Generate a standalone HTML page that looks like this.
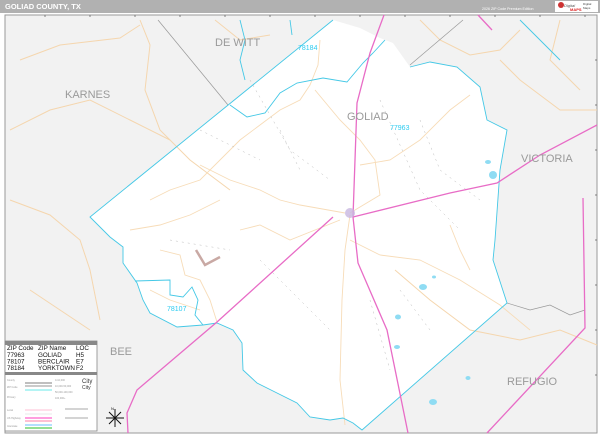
<!DOCTYPE html>
<html><head><meta charset="utf-8"><style>
html,body{margin:0;padding:0;width:600px;height:436px;overflow:hidden;background:#fff;font-family:"Liberation Sans",sans-serif}
</style></head><body>
<svg width="600" height="436" viewBox="0 0 600 436" xmlns="http://www.w3.org/2000/svg" font-family="Liberation Sans, sans-serif">
<rect width="600" height="436" fill="#fff"/>
<rect x="0" y="0" width="600" height="13" fill="#b1b1b1"/>
<text x="5" y="9" font-size="7.5" font-weight="bold" fill="#fff">GOLIAD COUNTY, TX</text>
<text x="482" y="10" font-size="3.6" fill="#fff">2026 ZIP Code Premium Edition</text>
<rect x="555" y="1" width="43" height="11" fill="#fff"/>
<circle cx="561" cy="5" r="3" fill="#c33"/>
<text x="564" y="7" font-size="4" fill="#555" font-style="italic">Digital</text>
<text x="570" y="11" font-size="4" fill="#d22" font-weight="bold">MAPS</text>
<text x="583" y="5" font-size="3" fill="#444">Digital</text>
<text x="583" y="9" font-size="3" fill="#444">Maps</text>
<rect x="5" y="15" width="592" height="418" fill="#f2f2f2" stroke="#999" stroke-width="1"/>
<g stroke="#666" stroke-width="0.8">
<line x1="45" y1="15" x2="45" y2="17"/><line x1="90" y1="15" x2="90" y2="17"/><line x1="135" y1="15" x2="135" y2="17"/><line x1="180" y1="15" x2="180" y2="17"/><line x1="225" y1="15" x2="225" y2="17"/><line x1="270" y1="15" x2="270" y2="17"/><line x1="315" y1="15" x2="315" y2="17"/><line x1="360" y1="15" x2="360" y2="17"/><line x1="405" y1="15" x2="405" y2="17"/><line x1="450" y1="15" x2="450" y2="17"/><line x1="495" y1="15" x2="495" y2="17"/><line x1="540" y1="15" x2="540" y2="17"/><line x1="585" y1="15" x2="585" y2="17"/>
<line x1="595" y1="60" x2="597" y2="60"/><line x1="595" y1="105" x2="597" y2="105"/><line x1="595" y1="150" x2="597" y2="150"/><line x1="595" y1="195" x2="597" y2="195"/><line x1="595" y1="240" x2="597" y2="240"/><line x1="595" y1="285" x2="597" y2="285"/><line x1="595" y1="330" x2="597" y2="330"/><line x1="595" y1="375" x2="597" y2="375"/>
</g>
<path d="M333,20 L360,28 L380,38 L393,43 L410,67 L430,62 L457,67 L480,87 L487,120 L507,130 L500,170 L495,240 L493,260 L507,303 L362,430 L353,423 L343,418 L330,420 L310,417 L297,403 L277,393 L257,383 L243,370 L242,343 L233,330 L217,323 L203,325 L177,327 L150,313 L143,300 L137,283 L123,263 L123,247 L110,237 L90,217 Z" fill="#fff"/>
<g fill="none" stroke="#f5d6ae" stroke-width="1">
<path d="M20,60 L60,45 L120,38 L140,25"/>
<path d="M10,130 L50,110 L90,100 L130,120 L170,140"/>
<path d="M140,20 L150,45 L145,90 L160,130 L190,160 L230,190"/>
<path d="M10,200 L50,215 L80,240 L90,270 L100,320"/>
<path d="M30,290 L60,310 L90,330"/>
<path d="M395,270 L430,300 L470,330 L520,340 L560,330 L597,345"/>
<path d="M500,60 L520,80 L560,110 L597,110"/>
<path d="M420,20 L440,40 L470,55 L500,50 L520,30"/>
<path d="M215,20 L240,40 L270,35"/>
<path d="M560,20 L550,60 L580,90"/>
</g>
<g fill="none" stroke="#f7dcb8" stroke-width="0.9">
<path d="M320,40 L318,65 L310,85 L300,100 L280,110 L260,125 L240,140 L220,160 L200,180 L170,190 L150,200"/>
<path d="M315,90 L340,120 L360,140 L375,160 L380,195 L350,213"/>
<path d="M200,165 L230,180 L260,190 L280,200 L300,205 L345,213"/>
<path d="M360,165 L390,160 L420,140 L450,110 L470,95"/>
<path d="M130,230 L160,225 L190,215 L220,200"/>
<path d="M240,230 L260,225 L290,240 L340,220"/>
<path d="M350,215 L345,250 L342,300 L340,380 L345,425"/>
<path d="M350,240 L380,255 L420,260 L460,280 L500,305 L530,330"/>
<path d="M450,225 L460,250 L470,270"/>
<path d="M160,250 L180,255 L185,275 L200,280 L210,300 L217,322"/>
<path d="M150,290 L170,300 L200,310"/>
</g>
<g fill="none" stroke="#999" stroke-width="0.7">
<path d="M158,20 L228,105"/>
<path d="M463,20 L410,65"/>
<path d="M507,303 L530,310 L550,305 L570,315 L585,310"/>
</g>
<g fill="none" stroke="#bbb" stroke-width="0.5" stroke-dasharray="2,4">
<path d="M250,80 L290,150 L330,180"/><path d="M380,100 L420,190 L460,230"/><path d="M200,130 L260,160"/><path d="M400,290 L430,330"/><path d="M260,260 L300,300 L330,330"/>
<path d="M420,120 L440,170 L480,200"/><path d="M170,240 L230,250"/><path d="M280,130 L300,170"/><path d="M370,300 L390,370"/>
</g>
<g fill="none" stroke="#44c8e6" stroke-width="0.9">
<path d="M333,20 L90,217 L110,237 L123,247 L123,263 L137,283 L143,300 L150,313 L177,327 L203,325 L217,323 L233,330 L242,343 L243,370 L257,383 L277,393 L297,403 L310,417 L330,420 L343,418 L353,423 L362,430 L507,303 L493,260 L495,240 L500,170 L507,130 L487,120 L480,87 L457,67 L430,62 L410,67"/>
<path d="M230,105 L247,117 L265,113 L280,93 L297,83 L323,78 L347,82 L363,63 L373,53 L385,40"/>
<path d="M135,281 L170,280 L170,295 L183,297 L192,287 L198,300 L195,315 L203,325"/>
<path d="M240,20 L245,40 L240,60 L245,80"/>
<path d="M290,20 L292,35"/>
<path d="M520,20 L540,40 L560,60"/>
</g>
<g fill="#8fdcf3">
<ellipse cx="493" cy="175" rx="4" ry="4"/><ellipse cx="488" cy="162" rx="3" ry="2"/>
<ellipse cx="423" cy="287" rx="4" ry="3"/><ellipse cx="398" cy="317" rx="3" ry="2.5"/><ellipse cx="397" cy="347" rx="3" ry="2"/>
<ellipse cx="433" cy="402" rx="4" ry="3"/><ellipse cx="468" cy="378" rx="2.5" ry="2"/><ellipse cx="434" cy="277" rx="2" ry="1.5"/>
</g>
<path d="M196,250 L205,265 L220,257" fill="none" stroke="#c9a9a4" stroke-width="2.5"/>
<g fill="none" stroke="#e86cc6" stroke-width="1.3">
<path d="M384,15 L370,53 L357,103 L353,217 L358,263 L387,330 L408,433"/>
<path d="M353,217 L450,193 L497,183 L540,155 L597,125"/>
<path d="M333,217 L217,322 L137,390 L127,413 L128,433"/>
<path d="M583,198 L585,328 L487,433"/>
<path d="M478,15 L492,30"/>
</g>
<circle cx="350" cy="213" r="5" fill="#c8b6e0" opacity="0.8"/>
<g font-size="11" fill="#9a9a9a">
<text x="215" y="46">DE WITT</text>
<text x="65" y="98">KARNES</text>
<text x="347" y="120">GOLIAD</text>
<text x="521" y="162">VICTORIA</text>
<text x="110" y="355">BEE</text>
<text x="507" y="385">REFUGIO</text>
</g>
<g font-size="7" fill="#2ccbf0">
<text x="298" y="50">78184</text>
<text x="390" y="130">77963</text>
<text x="167" y="311">78107</text>
</g>
<rect x="5" y="341" width="92" height="90" fill="#fff" stroke="#888" stroke-width="0.8"/>
<rect x="5" y="341" width="92" height="4" fill="#888"/>
<g font-size="6.3" fill="#111">
<text x="7" y="350">ZIP Code</text><text x="38" y="350">ZIP Name</text><text x="76" y="350">LOC</text>
<text x="7" y="357">77963</text><text x="38" y="357">GOLIAD</text><text x="76" y="357">H5</text>
<text x="7" y="363.5">78107</text><text x="38" y="363.5">BERCLAIR</text><text x="76" y="363.5">E7</text>
<text x="7" y="370">78184</text><text x="38" y="370">YORKTOWN</text><text x="76" y="370">F2</text>
</g>
<rect x="5" y="372" width="92" height="3" fill="#888"/>
<g stroke-width="1.2">
<line x1="25" y1="383" x2="52" y2="383" stroke="#999"/>
<line x1="25" y1="386" x2="52" y2="386" stroke="#aaa"/>
<line x1="25" y1="390" x2="52" y2="390" stroke="#8ee"/>
<line x1="25" y1="410" x2="52" y2="410" stroke="#fcd"/>
<line x1="25" y1="414" x2="52" y2="414" stroke="#eee"/>
<line x1="25" y1="418" x2="52" y2="418" stroke="#f6c"/>
<line x1="25" y1="421" x2="52" y2="421" stroke="#f9b"/>
<line x1="25" y1="425" x2="52" y2="425" stroke="#8cf"/>
<line x1="25" y1="428" x2="52" y2="428" stroke="#5c5"/>
</g>
<g fill="#999" font-size="2.5">
<text x="7" y="381">County</text><text x="7" y="388">ZIP Code</text><text x="7" y="398">Primary</text><text x="7" y="411">Local</text><text x="7" y="419">US Highway</text><text x="7" y="427">Interstate</text>
<text x="55" y="381">0-10,000</text><text x="55" y="387">10,000-50,000</text><text x="55" y="393">50,000-100,000</text><text x="55" y="399">100,000+</text>
</g>
<g fill="#333" font-size="6"><text x="82" y="383">City</text><text x="82" y="389" font-size="5">City</text></g>
<path d="M65,409 L88,409 M65,418 L88,418" stroke="#555" stroke-width="0.5"/>
<g stroke="#111" stroke-width="1" fill="none">
<path d="M115,409 L115,427 M106,418 L124,418 M109,412 L121,424 M121,412 L109,424"/>
</g>
<text x="111" y="410" font-size="4" fill="#111">N</text>
</svg>
</body></html>
